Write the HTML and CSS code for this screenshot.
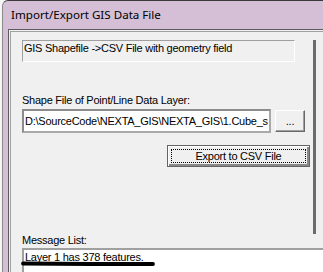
FILE: index.html
```html
<!DOCTYPE html>
<html lang="en">
<head>
    <meta charset="UTF-8">
    <meta name="viewport" content="width=device-width, initial-scale=1.0">
    <title>Import/Export GIS Data File</title>
    <link rel="stylesheet" href="styles.css">
</head>
<body>
    <div class="window">
        <div class="titlebar">Import/Export GIS Data File</div>
        <div class="frame">
            <div class="client">
                <div class="panel">
                    <div class="upper">
                        <section class="main">
                            <div class="static-box">GIS Shapefile -&gt;CSV File with geometry field</div>
                            <p class="label shape-label">Shape File of Point/Line Data Layer:</p>
                            <div class="file-row">
                                <div class="edit">D:\SourceCode\NEXTA_GIS\NEXTA_GIS\1.Cube_s</div>
                                <button class="btn browse">...</button>
                            </div>
                            <button class="btn export"><span class="focus">Export to CSV File</span></button>
                        </section>
                        <div class="edge"></div>
                    </div>
                    <p class="label">Message List:</p>
                    <div class="messages">
                        <div class="msg">Layer 1 has 378 features.</div>
                        <svg class="scribble" width="150" height="10" viewBox="0 0 150 10">
                            <path d="M2 4.5 L 70 5 L 132 5" stroke="#000" stroke-width="3.8" fill="none" stroke-linecap="round"/>
                        </svg>
                    </div>
                </div>
            </div>
        </div>
    </div>
</body>
</html>
```

FILE: styles.css
```css
* {
    margin: 0;
    padding: 0;
    box-sizing: border-box;
}

body {
    background-color: #f6f6f6;
    font-family: "Liberation Sans", Arial, sans-serif;
    font-size: 11px;
    letter-spacing: -0.25px;
    color: #000;
    overflow: hidden;
    height: 272px;
}

.window {
    margin-left: 2px;
    height: 272px;
    overflow: hidden;
    background-color: #d4bfd6;
    border-top: 1px solid #3a3a3a;
    border-left: 1px solid #8a8a8a;
    border-top-left-radius: 6px;
}

.titlebar {
    height: 28px;
    padding: 6px 0 0 8px;
    font-family: "Noto Sans", sans-serif;
    font-size: 11.6px;
    letter-spacing: 0;
    line-height: 16px;
    color: #000;
}

.frame {
    padding-left: 5px;
    height: 243px;
}

.client {
    height: 100%;
    background-color: #f0f0f0;
    border-top: 1px solid #5c5c5c;
    border-left: 1px solid #5c5c5c;
}

.panel {
    margin: 1px 0 0 1px;
    height: 241px;
    border-top: 1px solid #a0a0a0;
    border-left: 1px solid #a0a0a0;
    padding: 8px 0 0 11px;
}

.upper {
    display: flex;
    height: 194px;
}

.main {
    width: 291px;
}

.edge {
    width: 3px;
    background-color: #6b6b6b;
}

.static-box {
    width: 273px;
    height: 22px;
    border-top: 1px solid #a0a0a0;
    border-left: 1px solid #a0a0a0;
    border-right: 1px solid #fff;
    border-bottom: 1px solid #fff;
    padding: 1px 0 0 1px;
    line-height: 13px;
}

.label {
    line-height: 13px;
}

.shape-label {
    margin-top: 32px;
}

.file-row {
    display: flex;
    align-items: flex-start;
    gap: 4px;
    margin-top: 2px;
}

.edit {
    width: 249px;
    height: 24px;
    background-color: #fff;
    border: 2px solid #a9a9a9;
    border-top-color: #8c8c8c;
    border-left-color: #8c8c8c;
    padding: 3px 0 0 1px;
    white-space: nowrap;
    overflow: hidden;
    line-height: 14px;
}

.btn {
    font-family: "Liberation Sans", Arial, sans-serif;
    font-size: 11px;
    letter-spacing: -0.25px;
    color: #000;
    background-color: #f0f0f0;
    border: 1px solid;
    border-color: #fff #696969 #696969 #fff;
    box-shadow: inset -1px -1px #a0a0a0;
}

.browse {
    width: 30px;
    height: 22px;
    margin-top: 1px;
}

.export {
    display: block;
    width: 143px;
    height: 22px;
    margin: 12px 0 0 145px;
    border-color: #646464;
    box-shadow: inset 1px 1px #fff, inset -2px -2px #8a8a8a;
    padding: 3px;
}

.focus {
    display: block;
    height: 100%;
    border: 1px dotted #000;
    line-height: 12px;
}

.messages {
    position: relative;
    height: 24px;
    margin-top: 1px;
    background-color: #fff;
    border-top: 2px solid #a0a0a0;
    border-left: 2px solid #a0a0a0;
    padding: 1px 0 0 1px;
}

.msg {
    line-height: 13px;
}

.scribble {
    position: absolute;
    left: -3px;
    top: 9px;
}
```
